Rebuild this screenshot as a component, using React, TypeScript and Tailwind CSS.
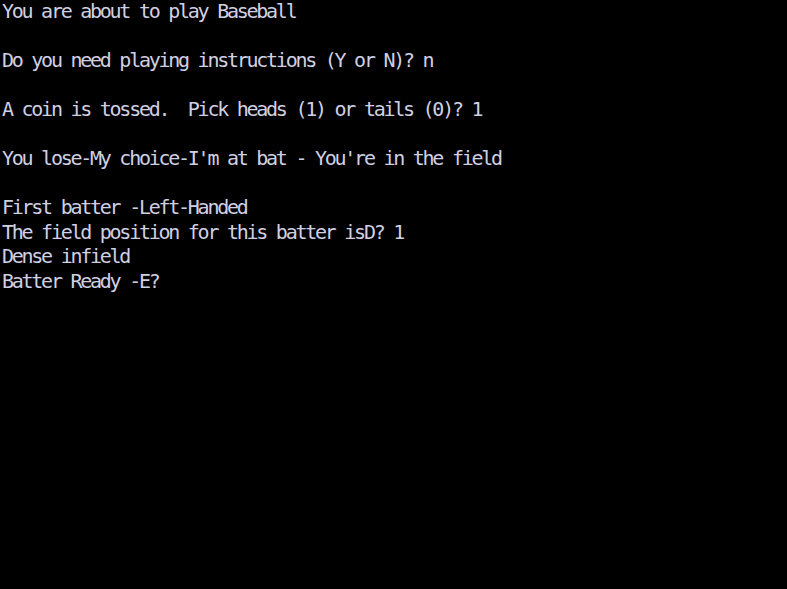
export default function App() {
  const lines = [
    'You are about to play Baseball',
    '',
    'Do you need playing instructions (Y or N)? n',
    '',
    'A coin is tossed.  Pick heads (1) or tails (0)? 1',
    '',
    "You lose-My choice-I'm at bat - You're in the field",
    '',
    'First batter -Left-Handed',
    'The field position for this batter isD? 1',
    'Dense infield',
    'Batter Ready -E?',
  ];

  return (
    <div className="h-[589px] w-[787px] overflow-hidden bg-black pl-[2px] pt-0">
      <pre className="m-0 font-['DejaVu_Sans_Mono','Liberation_Mono',monospace] text-[20px] leading-[24.5px] tracking-[-2.26px] text-[#d0d0e4] -mt-[1px]">
        {lines.map((line, i) => (
          <div key={i} className="h-[24.5px] whitespace-pre">
            {line}
          </div>
        ))}
      </pre>
    </div>
  );
}
